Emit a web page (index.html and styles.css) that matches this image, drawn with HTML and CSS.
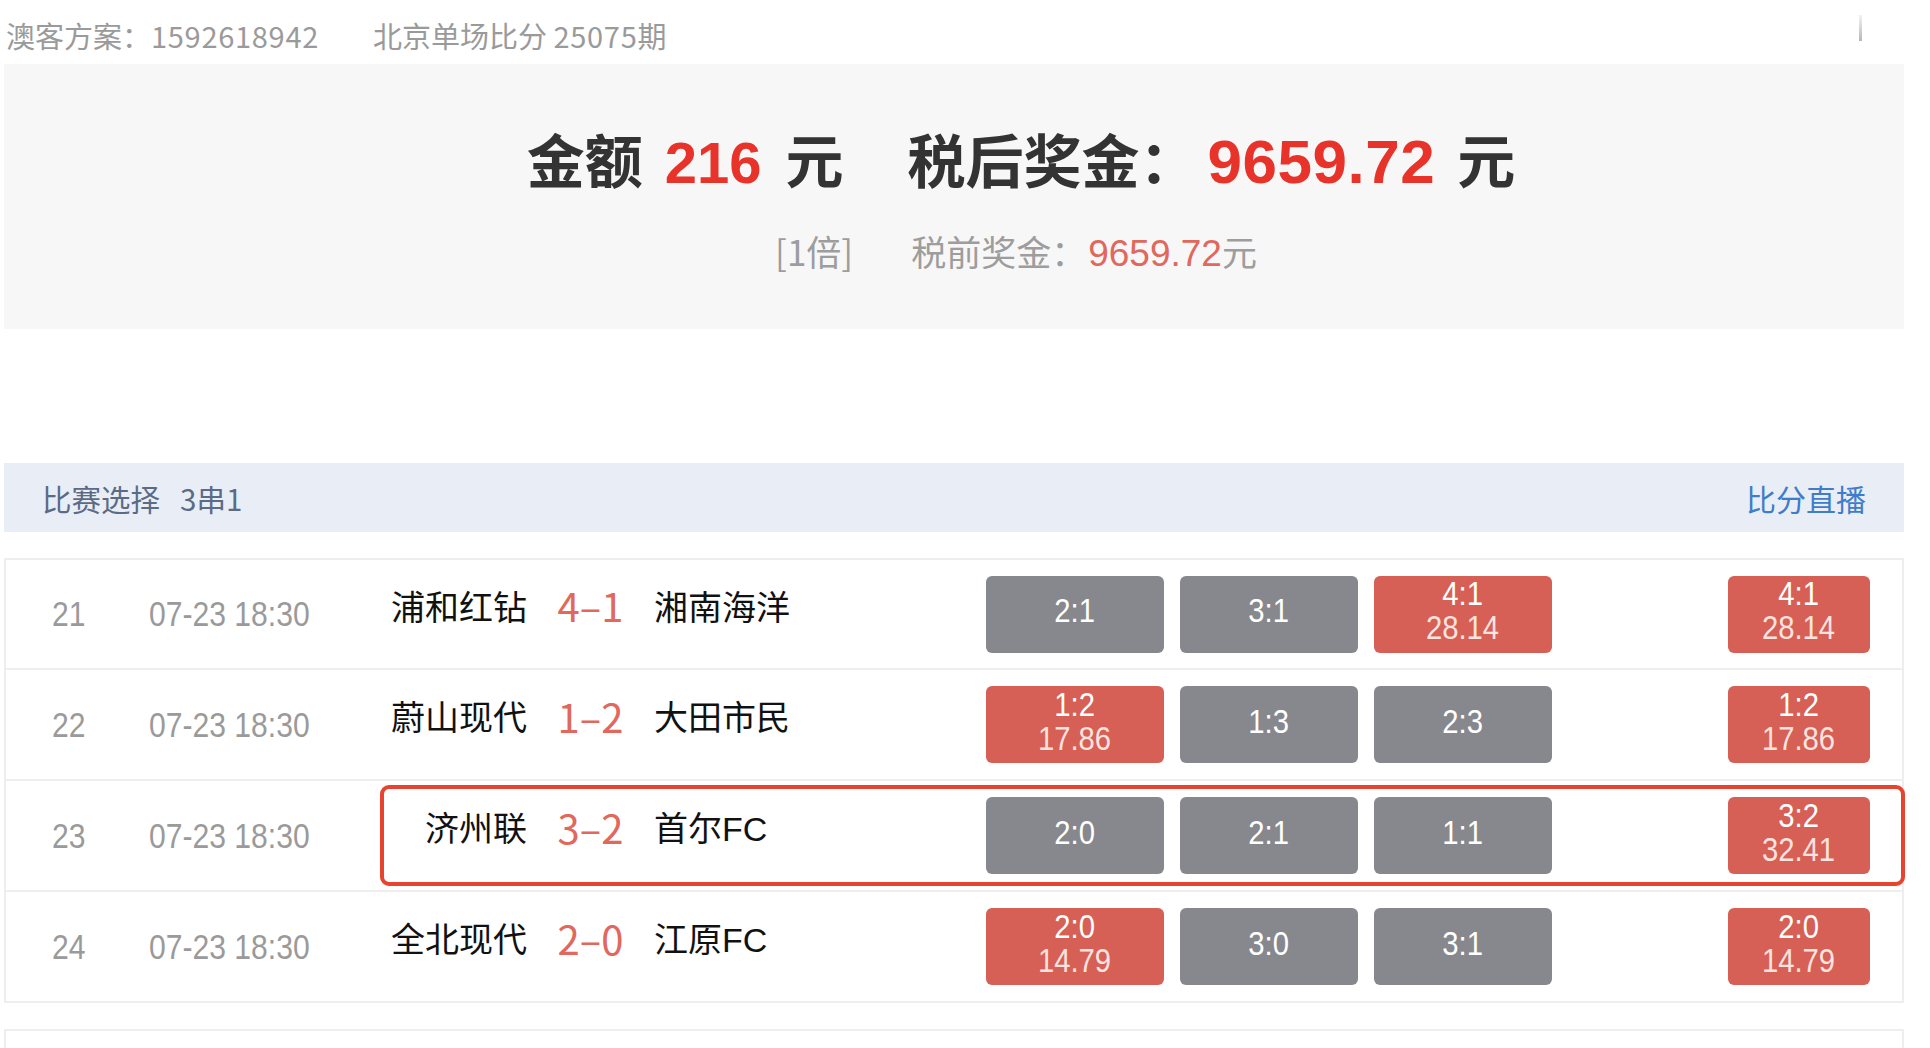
FILE: index.html
```html
<!DOCTYPE html>
<html lang="zh-CN">
<head>
<meta charset="utf-8">
<title>澳客方案</title>
<link rel="stylesheet" href="styles.css">
</head>
<body>
<div class="topline">
  <span class="plan">澳客方案：<span class="digits">1592618942</span></span>
  <span class="issue">北京单场比分 <span class="digits">25075</span>期</span>
  <span class="scroll-ind"></span>
</div>

<div class="summary">
  <div class="big">
    <span>金额</span><em class="red amt">216</em><span class="yuan1">元</span><span class="sep"></span><span>税后奖金：</span><em class="red wide">9659.72</em> <span class="yuan">元</span>
  </div>
  <div class="small">
    <span class="mult">[1倍]</span><span class="pre">税前奖金：<em class="red2">9659.72</em>元</span>
  </div>
</div>

<div class="section-head">
  <span class="title">比赛选择<span class="pass">3串1</span></span>
  <span class="live">比分直播</span>
</div>

<div class="matches">
  <div class="row">
    <span class="num"><b>21</b></span>
    <span class="date"><b>07-23 18:30</b></span>
    <span class="home">浦和红钻</span>
    <span class="score">4–1</span>
    <span class="away">湘南海洋</span>
    <div class="opts">
      <span class="btn"><b>2:1</b></span>
      <span class="btn"><b>3:1</b></span>
      <span class="btn hit"><b>4:1</b><b class="odd">28.14</b></span>
    </div>
    <span class="btn hit result"><b>4:1</b><b class="odd">28.14</b></span>
  </div>
  <div class="row">
    <span class="num"><b>22</b></span>
    <span class="date"><b>07-23 18:30</b></span>
    <span class="home">蔚山现代</span>
    <span class="score">1–2</span>
    <span class="away">大田市民</span>
    <div class="opts">
      <span class="btn hit"><b>1:2</b><b class="odd">17.86</b></span>
      <span class="btn"><b>1:3</b></span>
      <span class="btn"><b>2:3</b></span>
    </div>
    <span class="btn hit result"><b>1:2</b><b class="odd">17.86</b></span>
  </div>
  <div class="row">
    <span class="num"><b>23</b></span>
    <span class="date"><b>07-23 18:30</b></span>
    <span class="home">济州联</span>
    <span class="score">3–2</span>
    <span class="away">首尔FC</span>
    <div class="opts">
      <span class="btn"><b>2:0</b></span>
      <span class="btn"><b>2:1</b></span>
      <span class="btn"><b>1:1</b></span>
    </div>
    <span class="btn hit result"><b>3:2</b><b class="odd">32.41</b></span>
    <span class="mark"></span>
  </div>
  <div class="row">
    <span class="num"><b>24</b></span>
    <span class="date"><b>07-23 18:30</b></span>
    <span class="home">全北现代</span>
    <span class="score">2–0</span>
    <span class="away">江原FC</span>
    <div class="opts">
      <span class="btn hit"><b>2:0</b><b class="odd">14.79</b></span>
      <span class="btn"><b>3:0</b></span>
      <span class="btn"><b>3:1</b></span>
    </div>
    <span class="btn hit result"><b>2:0</b><b class="odd">14.79</b></span>
  </div>
</div>

<div class="next"></div>
</body>
</html>
```

FILE: styles.css
```css
* { box-sizing: border-box; }
html, body { margin: 0; padding: 0; background: #fff; }
body {
  font-family: "Liberation Sans", "Noto Sans CJK SC", sans-serif;
  color: #333;
  width: 1930px;
  overflow: hidden;
}
em, i { font-style: normal; }
b { font-weight: normal; }

.topline {
  height: 64px;
  display: flex;
  align-items: center;
  padding: 6px 0 0 6px;
  font-family: "Noto Sans CJK SC", sans-serif;
  font-size: 29px;
  color: #9a9a9a;
  white-space: nowrap;
}
.topline .digits { letter-spacing: 0.7px; }
.topline .issue { margin-left: 54px; }
.topline .scroll-ind {
  margin-left: auto;
  margin-right: 68px;
  width: 3px;
  height: 26px;
  align-self: flex-start;
  margin-top: 9px;
  background: linear-gradient(#f2f2f2, #b8b8b8);
}

.summary {
  margin: 0 26px 0 4px;
  height: 265px;
  background: #f7f7f7;
  display: flex;
  flex-direction: column;
  align-items: center;
  padding: 63px 0 0 134px;
}
.summary .big {
  font-family: "Liberation Sans", "Noto Sans CJK SC", sans-serif;
  font-weight: bold;
  font-size: 58px;
  line-height: 70px;
  color: #333;
  white-space: nowrap;
}
.summary .big .amt { margin-left: 22px; }
.summary .big .yuan1 { margin-left: 24px; }
.summary .big .sep { display: inline-block; width: 64px; }
.summary .big .yuan { margin-left: 6px; }
.summary .red { color: #e8332a; }
.summary .red.wide { font-size: 62px; margin-left: 10px; letter-spacing: 0.5px; }
.summary .small {
  margin-top: 33px;
  margin-right: 10px;
  font-family: "Noto Sans CJK SC", sans-serif;
  font-size: 35px;
  line-height: 40px;
  color: #9d9d9d;
  white-space: nowrap;
}
.summary .small .pre { margin-left: 58px; }
.summary .red2 {
  color: #e0685c;
  font-family: "Liberation Sans", sans-serif;
  font-size: 37px;
  margin-left: 2px;
}

.section-head {
  margin: 134px 26px 0 4px;
  height: 69px;
  background: #e9eef6;
  display: flex;
  align-items: center;
  justify-content: space-between;
  padding: 0 38px;
  font-family: "Noto Sans CJK SC", sans-serif;
  font-size: 29.5px;
  white-space: nowrap;
}
.section-head .title { color: #5b6b86; }
.section-head .pass { margin-left: 20px; }
.section-head .live { color: #3f7cc9; font-size: 30px; }

.matches {
  margin: 26px 26px 0 4px;
  border: 2px solid #eeeeee;
  border-bottom: none;
}
.row {
  position: relative;
  height: 111px;
  border-bottom: 2px solid #eeeeee;
  display: flex;
  align-items: center;
}
.row:first-child { height: 110px; }
.num, .date {
  font-family: "Liberation Sans", sans-serif;
  font-size: 35px;
  color: #9a9a9a;
  white-space: nowrap;
}
.num b, .date b {
  display: inline-block;
  transform: scaleX(0.86);
  transform-origin: left center;
}
.num { width: 143px; padding-left: 46px; }
.date { width: 171px; }
.home, .score, .away {
  padding-bottom: 18px;
  white-space: nowrap;
}
.home, .away {
  font-family: "Liberation Sans", "Noto Sans CJK SC", sans-serif;
  font-size: 34px;
  color: #111;
}
.home { width: 207px; text-align: right; }
.score {
  width: 127px;
  text-align: center;
  font-family: "Noto Sans CJK SC", sans-serif;
  font-size: 40px;
  color: #e0685c;
}
.away { width: 332px; }
.opts { display: flex; gap: 16px; }
.btn {
  width: 178px;
  height: 77px;
  border-radius: 6px;
  background: #87888d;
  color: #fff;
  display: flex;
  flex-direction: column;
  align-items: center;
  justify-content: center;
  padding-bottom: 8px;
  font-family: "Liberation Sans", sans-serif;
  font-size: 34px;
  line-height: 34px;
  white-space: nowrap;
}
.btn b {
  display: block;
  transform: scaleX(0.86);
}
.btn.hit { background: #d65f56; }
.btn .odd { color: #fbe3df; }
.btn.result { width: 142px; margin-left: 176px; }

.mark {
  position: absolute;
  left: 374px;
  right: -3px;
  top: 4px;
  bottom: 4px;
  border: 4px solid #e8432f;
  border-radius: 9px;
  pointer-events: none;
}

.next {
  margin: 26px 26px 0 4px;
  height: 40px;
  border: 2px solid #eeeeee;
}
```
